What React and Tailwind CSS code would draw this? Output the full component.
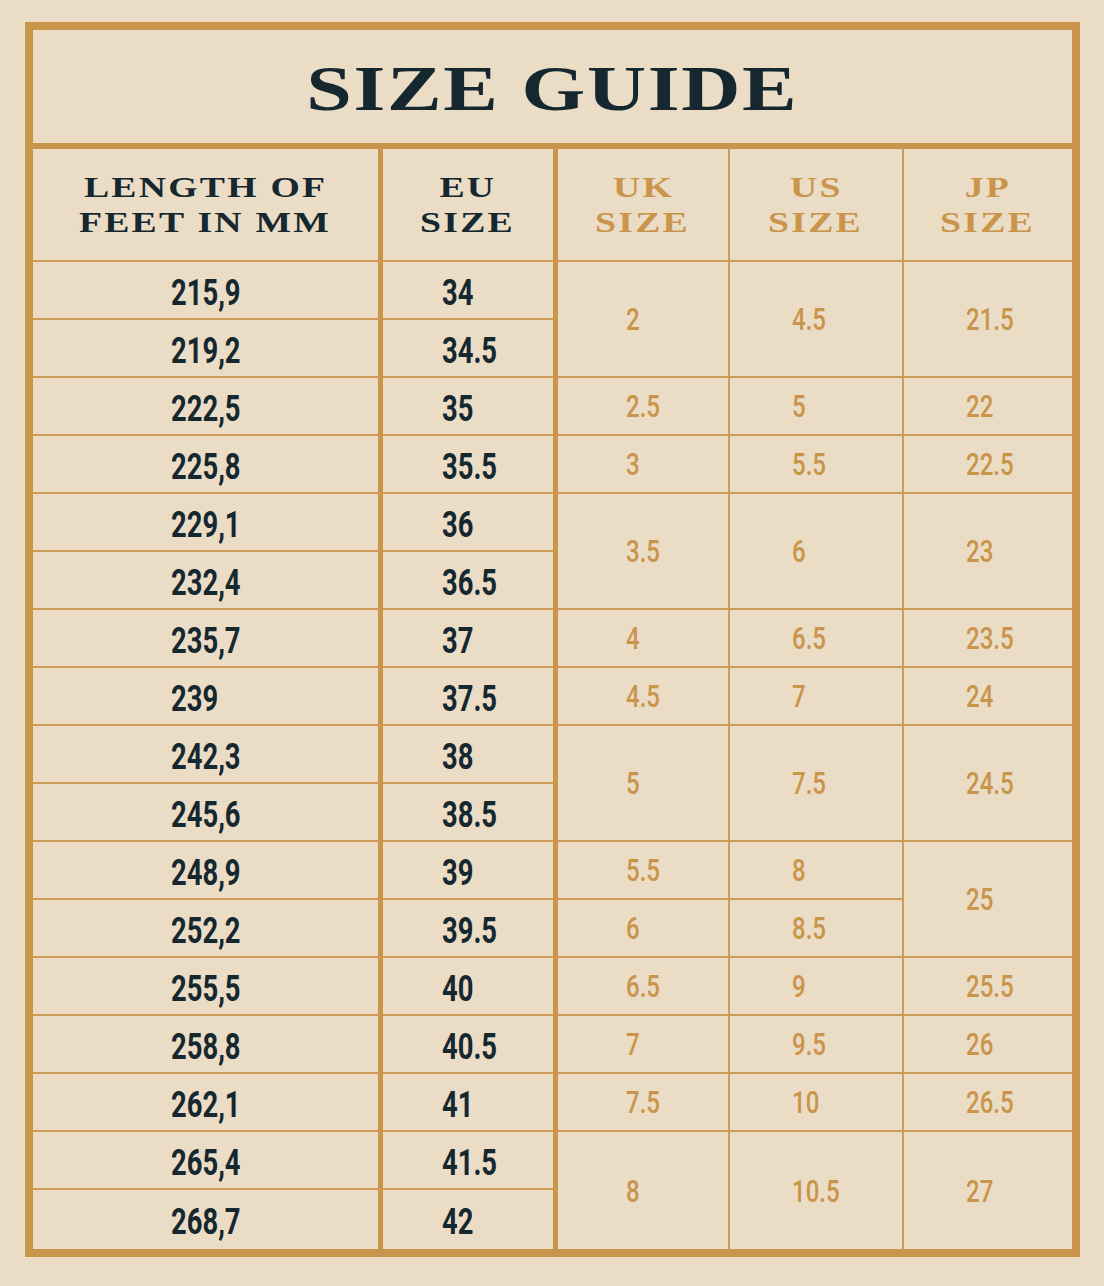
import React from 'react'

const rows = [
    ['215,9', '34', ['2', 2], ['4.5', 2], ['21.5', 2]],
    ['219,2', '34.5'],
    ['222,5', '35', ['2.5', 1], ['5', 1], ['22', 1]],
    ['225,8', '35.5', ['3', 1], ['5.5', 1], ['22.5', 1]],
    ['229,1', '36', ['3.5', 2], ['6', 2], ['23', 2]],
    ['232,4', '36.5'],
    ['235,7', '37', ['4', 1], ['6.5', 1], ['23.5', 1]],
    ['239', '37.5', ['4.5', 1], ['7', 1], ['24', 1]],
    ['242,3', '38', ['5', 2], ['7.5', 2], ['24.5', 2]],
    ['245,6', '38.5'],
    ['248,9', '39', ['5.5', 1], ['8', 1], ['25', 2]],
    ['252,2', '39.5', ['6', 1], ['8.5', 1]],
    ['255,5', '40', ['6.5', 1], ['9', 1], ['25.5', 1]],
    ['258,8', '40.5', ['7', 1], ['9.5', 1], ['26', 1]],
    ['262,1', '41', ['7.5', 1], ['10', 1], ['26.5', 1]],
    ['265,4', '41.5', ['8', 2], ['10.5', 2], ['27', 2]],
    ['268,7', '42'],
]

const LAST = rows.length - 1

function HeadCell({ lines, gold, border }) {
    return (
        <div className={`flex flex-col items-center justify-center border-b-2 border-[#cd9b55] ${border}`}>
            {lines.map((line) => (
                <span key={line}
                    className={`inline-block scale-x-[1.3] whitespace-nowrap font-['Liberation_Serif',serif] text-[29px] font-bold uppercase leading-[35px] tracking-[0.06em] ${gold ? 'text-[#c9954a]' : 'text-[#15272f]'}`}>
                    {line}
                </span>
            ))}
        </div>
    )
}

function NumCell({ value, gold, pad, border, last, span }) {
    return (
        <div className={`flex items-center ${gold ? '' : 'pt-1'} ${pad} ${border} ${span === 2 ? 'row-span-2' : ''} ${last ? '' : 'border-b-2 border-b-[#cd9b55]'}`}>
            {gold
                ? <span className="inline-block origin-left scale-x-[0.75] font-['Roboto',sans-serif] text-[32px] font-medium leading-none text-[#c9954a]">{value}</span>
                : <span className="inline-block origin-left scale-x-[0.74] font-['Roboto',sans-serif] text-[37px] font-bold leading-none text-[#15272f]">{value}</span>}
        </div>
    )
}

export default function App() {
    const thick = 'border-r-[5px] border-r-[#c9954a]'
    const thin = 'border-r-2 border-r-[#cd9b55]'

    return (
        <div className="min-h-screen bg-[#ebdcc6] pl-[25px] pt-[22px]">
            <div className="w-[1055px] border-8 border-[#c9954a]">
                {/* title */}
                <div className="flex h-[119px] items-center justify-center border-b-[6px] border-[#c9954a] pt-[6px]">
                    <h1 className="inline-block scale-x-[1.3] font-['Liberation_Serif',serif] text-[63px] font-bold uppercase leading-none tracking-[0.02em] text-[#15272f]">
                        Size Guide
                    </h1>
                </div>

                <div className="grid grid-cols-[350px_175px_172px_174px_168px] grid-rows-[113px_repeat(16,58px)_59px]">
                    <HeadCell lines={['Length of', 'feet in mm']} border={thick} />
                    <HeadCell lines={['EU', 'Size']} border={thick} />
                    <HeadCell lines={['UK', 'Size']} gold border={thin} />
                    <HeadCell lines={['US', 'Size']} gold border={thin} />
                    <HeadCell lines={['JP', 'Size']} gold border="" />

                    {rows.map((row, i) => (
                        <React.Fragment key={i}>
                            <NumCell value={row[0]} pad="pl-[138px]" border={thick} last={i === LAST} />
                            <NumCell value={row[1]} pad="pl-[59px]" border={thick} last={i === LAST} />
                            {row[2] && <NumCell value={row[2][0]} span={row[2][1]} gold pad="pl-[68px]" border={thin} last={i + row[2][1] - 1 === LAST} />}
                            {row[3] && <NumCell value={row[3][0]} span={row[3][1]} gold pad="pl-[62px]" border={thin} last={i + row[3][1] - 1 === LAST} />}
                            {row[4] && <NumCell value={row[4][0]} span={row[4][1]} gold pad="pl-[62px]" border="" last={i + row[4][1] - 1 === LAST} />}
                        </React.Fragment>
                    ))}
                </div>
            </div>
        </div>
    )
}
